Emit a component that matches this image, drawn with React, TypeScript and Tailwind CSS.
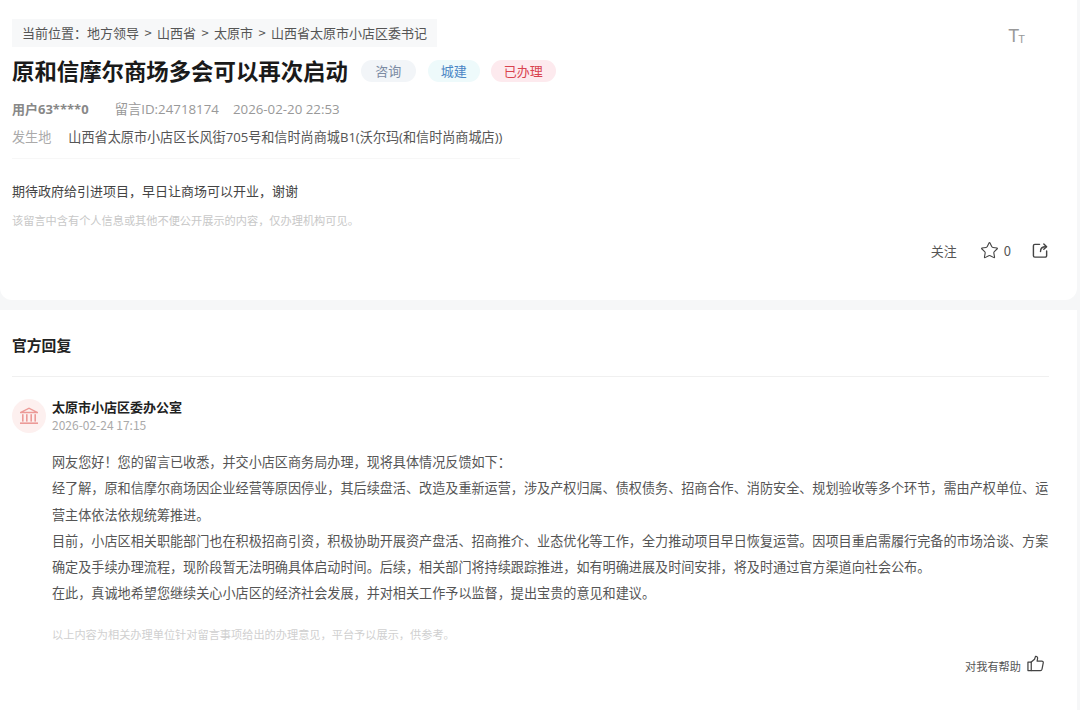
import { Star } from "lucide-react";

const replyLines = [
    "网友您好！您的留言已收悉，并交小店区商务局办理，现将具体情况反馈如下：",
    "经了解，原和信摩尔商场因企业经营等原因停业，其后续盘活、改造及重新运营，涉及产权归属、债权债务、招商合作、消防安全、规划验收等多个环节，需由产权单位、运营主体依法依规统筹推进。",
    "目前，小店区相关职能部门也在积极招商引资，积极协助开展资产盘活、招商推介、业态优化等工作，全力推动项目早日恢复运营。因项目重启需履行完备的市场洽谈、方案确定及手续办理流程，现阶段暂无法明确具体启动时间。后续，相关部门将持续跟踪推进，如有明确进展及时间安排，将及时通过官方渠道向社会公布。",
    "在此，真诚地希望您继续关心小店区的经济社会发展，并对相关工作予以监督，提出宝贵的意见和建议。",
];

function ShareIcon() {
    return (
        <svg width="17" height="17" viewBox="0 0 18 18" fill="none" stroke="#444" strokeWidth="1.5" strokeLinecap="round" strokeLinejoin="round">
            <path d="M8 2.5H3a1.5 1.5 0 0 0-1.5 1.5v10.5A1.5 1.5 0 0 0 3 16h11a1.5 1.5 0 0 0 1.5-1.5V9.5" />
            <path d="M9 10c0-3 1.8-5 5.5-5" />
            <path d="M12.5 2l3 3-3 2.6" />
        </svg>
    );
}

function ThumbIcon() {
    return (
        <svg width="17" height="17" viewBox="0 0 18 18" fill="none" stroke="#444" strokeWidth="1.3" strokeLinejoin="round" strokeLinecap="round">
            <path d="M1 7.5h3.5v9H1z" />
            <path d="M4.5 7.5 8 4.5 9 1.5c1.5-.3 2.4.8 2.2 2.2L10.7 6.5h5c1 0 1.7.8 1.5 1.8l-1.3 6.7c-.2.9-.9 1.5-1.8 1.5H4.5" />
        </svg>
    );
}

function BankIcon() {
    return (
        <svg width="20" height="18" viewBox="0 0 20 18" fill="#ec9a97">
            <path d="M10 0.5 19 5v1.2H1V5zM10 2 4.6 4.8h10.8z" fillRule="evenodd" />
            <rect x="3" y="7.2" width="1.6" height="7.4" />
            <rect x="7" y="7.2" width="1.6" height="7.4" />
            <rect x="11.4" y="7.2" width="1.6" height="7.4" />
            <rect x="15.4" y="7.2" width="1.6" height="7.4" />
            <rect x="1" y="15.4" width="18" height="1.6" />
        </svg>
    );
}

export default function App() {
    return (
        <div className="w-[1080px] h-[710px] overflow-hidden bg-[#f6f7f8] font-['Noto_Sans_CJK_SC','Noto_Sans',sans-serif]">
            <div className="mr-[3px] h-[300px] bg-white rounded-b-xl pl-3 pr-[28px] pt-[19px]">
                <div className="flex justify-between">
                    <div className="h-[28px] w-[425px] bg-[#f7f8f9] pl-[10px] text-[13px] leading-[28px] text-[#555] whitespace-nowrap [word-spacing:2.5px]">
                        当前位置：地方领导 &gt; 山西省 &gt; 太原市 &gt; 山西省太原市小店区委书记
                    </div>
                    <div className="self-start pr-[24px] pt-[8px] text-[#999] leading-none font-['Liberation_Sans',sans-serif] flex items-end">
                        <span className="text-[18px]">T</span>
                        <span className="-ml-px text-[11px]">T</span>
                    </div>
                </div>
                <div className="mt-[7px] flex items-center">
                    <h1 className="text-[22.4px] leading-[32px] font-bold text-[#1a1a1a] whitespace-nowrap">原和信摩尔商场多会可以再次启动</h1>
                    <span className="ml-[13px] mt-[2px] h-[22px] w-[55px] rounded-full bg-[#f2f5f8] text-center text-[13px] leading-[22px] text-[#7c8ba3]">咨询</span>
                    <span className="ml-[12px] mt-[2px] h-[22px] w-[52px] rounded-full bg-[#eefafb] text-center text-[13px] leading-[22px] text-[#4a86c5]">城建</span>
                    <span className="ml-[11px] mt-[2px] h-[22px] w-[65px] rounded-full bg-[#fdeaee] text-center text-[13px] leading-[22px] text-[#d9434e]">已办理</span>
                </div>
                <div className="mt-[13px] flex text-[13.3px] leading-[20px] text-[#999] font-['Open_Sans','Noto_Sans_CJK_SC',sans-serif]">
                    <span className="text-[13px] font-bold text-[#888]">用户63****0</span>
                    <span className="ml-[26px]">留言ID:24718174</span>
                    <span className="ml-[14px]">2026-02-20 22:53</span>
                </div>
                <div className="mt-[8px] flex text-[13.12px] leading-[20px] font-['Open_Sans','Noto_Sans_CJK_SC',sans-serif]">
                    <span className="text-[#aaa]">发生地</span>
                    <span className="ml-[17px] text-[#555]">山西省太原市小店区长风街705号和信时尚商城B1(沃尔玛(和信时尚商城店))</span>
                </div>
                <div className="mt-[11px] h-px w-[508px] bg-[#f7f7f7]" />
                <p className="mt-[22px] text-[13px] leading-[20px] text-[#444]">期待政府给引进项目，早日让商场可以开业，谢谢</p>
                <p className="mt-[10px] text-[11.2px] leading-[18px] text-[#c8c8c8]">该留言中含有个人信息或其他不便公开展示的内容，仅办理机构可见。</p>
                <div className="mt-[12px] flex items-center justify-end text-[13px] text-[#555]">
                    <span>关注</span>
                    <Star className="ml-[23px]" size={19} strokeWidth={1.4} color="#444" />
                    <span className="ml-[5px] mr-[21px]">0</span>
                    <ShareIcon />
                </div>
            </div>
            <div className="mt-[10px] mr-[3px] h-[400px] bg-white pl-3 pr-[28px] pt-[23px]">
                <h2 className="text-[14.8px] leading-[24px] font-bold text-[#222]">官方回复</h2>
                <div className="mt-[19px] h-px bg-[#f0f0f0]" />
                <div className="mt-[20px] flex items-center">
                    <div className="flex h-[34px] w-[34px] items-center justify-center rounded-full bg-[#fdf0ef]">
                        <BankIcon />
                    </div>
                    <div className="ml-[6px]">
                        <div className="text-[13px] leading-[19px] font-bold text-[#222]">太原市小店区委办公室</div>
                        <div className="text-[12px] leading-[18px] text-[#aaa]">2026-02-24 17:15</div>
                    </div>
                </div>
                <div className="mt-[15px] -mr-[2px] pl-[40px] text-[13.12px] leading-[26.3px] text-[#555]">
                    {replyLines.map((line) => (
                        <p key={line}>{line}</p>
                    ))}
                </div>
                <p className="mt-[18px] pl-[40px] text-[11.2px] leading-[18px] text-[#d0d0d0]">以上内容为相关办理单位针对留言事项给出的办理意见，平台予以展示，供参考。</p>
                <div className="mt-[13px] mr-[5px] flex items-center justify-end text-[11.2px] text-[#555]">
                    <span className="mt-[2px]">对我有帮助</span>
                    <span className="ml-[6px] -mt-[4px]"><ThumbIcon /></span>
                </div>
            </div>
        </div>
    );
}
